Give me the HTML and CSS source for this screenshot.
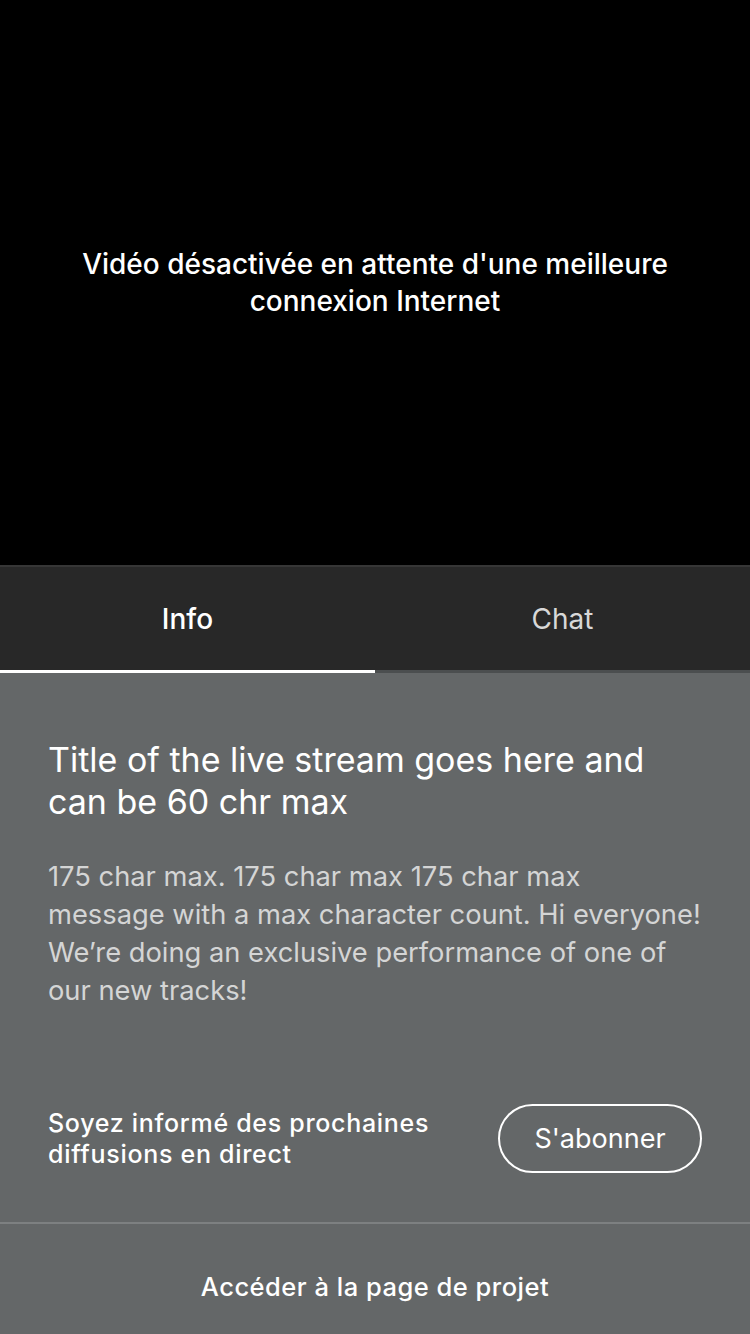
FILE: index.html
```html
<!DOCTYPE html>
<html lang="fr">
<head>
<meta charset="utf-8">
<title>Live</title>
<link rel="stylesheet" href="styles.css">
</head>
<body>
<div class="screen">
  <section class="video">
    <p class="video-msg">Vidéo désactivée en attente d'une meilleure connexion Internet</p>
  </section>
  <nav class="tabs">
    <div class="tab active">Info</div>
    <div class="tab">Chat</div>
  </nav>
  <main class="info">
    <div class="info-body">
      <h1 class="title">Title of the live stream goes here and can be 60 chr max</h1>
      <p class="desc">175 char max. 175 char max 175 char max<br>message with a max character count. Hi everyone!<br>We’re doing an exclusive performance of one of<br>our new tracks!</p>
      <div class="subscribe">
        <p class="subscribe-text">Soyez informé des prochaines diffusions en direct</p>
        <button class="subscribe-btn">S'abonner</button>
      </div>
    </div>
    <a class="project-link">Accéder à la page de projet</a>
  </main>
</div>
</body>
</html>
```

FILE: styles.css
```css
* { box-sizing: border-box; }
html, body { margin: 0; padding: 0; }
body {
  font-family: Inter, Roboto, "Noto Sans", "Liberation Sans", sans-serif;
  background: #646768;
  color: #fff;
}
.screen {
  width: 750px;
  height: 1334px;
  display: flex;
  flex-direction: column;
  overflow: hidden;
}
.video {
  background: #000;
  display: flex;
  align-items: center;
  justify-content: center;
  padding: 0 50px;
  border-bottom: 2px solid #363636;
  height: 567px;
}
.video-msg {
  margin: 0;
  text-align: center;
  font-size: 28px;
  font-weight: 500;
  line-height: 37px;
}
.tabs {
  display: flex;
  height: 106px;
  background: #282828;
  border-bottom: 3px solid #4b4e4f;
}
.tab {
  flex: 1;
  display: flex;
  align-items: center;
  justify-content: center;
  font-size: 28px;
  color: #d8d8d8;
  margin-bottom: -3px;
  border-bottom: 3px solid transparent;
}
.tab.active {
  color: #fff;
  font-weight: 500;
  border-bottom-color: #fff;
}
.info {
  flex: 1;
  display: flex;
  flex-direction: column;
  background: #646768;
}
.info-body {
  padding: 66px 48px 49px;
  border-bottom: 2px solid #7d8081;
}
.title {
  margin: 0;
  font-size: 34px;
  font-weight: 400;
  line-height: 42px;
  color: #fff;
}
.desc {
  margin: 35px 0 0;
  font-size: 27.3px;
  line-height: 38px;
  color: #d4d5d5;
  white-space: nowrap;
}
.subscribe {
  margin-top: 94px;
  display: flex;
  align-items: center;
  justify-content: space-between;
}
.subscribe-text {
  margin: 0;
  max-width: 420px;
  font-size: 25px;
  letter-spacing: 0.7px;
  font-weight: 500;
  line-height: 31px;
  color: #fff;
}
.subscribe-btn {
  width: 204px;
  height: 69px;
  border: 2px solid #fff;
  border-radius: 35px;
  background: transparent;
  color: #fff;
  font-family: inherit;
  font-size: 27px;
  padding: 0;
}
.project-link {
  flex: 1;
  display: flex;
  align-items: center;
  justify-content: center;
  padding-top: 14px;
  font-size: 25.5px;
  letter-spacing: 0.5px;
  font-weight: 500;
  color: #fff;
}
```
